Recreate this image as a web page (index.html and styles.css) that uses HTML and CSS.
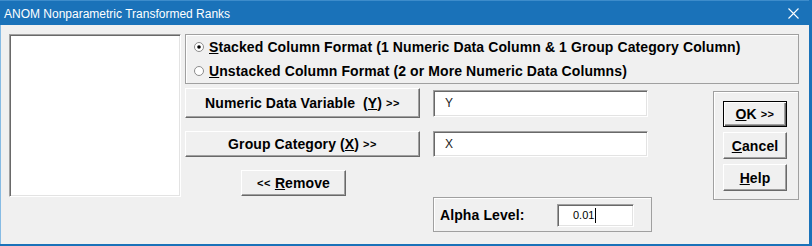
FILE: index.html
```html
<!DOCTYPE html>
<html lang="en">
<head>
    <meta charset="UTF-8">
    <title>ANOM Nonparametric Transformed Ranks</title>
    <link rel="stylesheet" href="styles.css">
</head>
<body>
    <div class="window">
        <div class="titlebar">
            <span class="title">ANOM Nonparametric Transformed Ranks</span>
            <svg class="close" width="11" height="11" viewBox="0 0 11 11">
                <path d="M0.5 0.5 L10.5 10.5 M10.5 0.5 L0.5 10.5" stroke="#fff" stroke-width="1.1" fill="none"/>
            </svg>
        </div>

        <div class="client">
            <div class="listbox"></div>

            <div class="main">
                <div class="group format">
                    <label class="radio">
                        <svg width="12" height="12" viewBox="0 0 12 12">
                            <circle cx="6" cy="6" r="4.5" fill="#fff" stroke="#8c8c8c"/>
                            <circle cx="6" cy="6" r="1.8" fill="#000"/>
                        </svg>
                        <span><u>S</u>tacked Column Format (1 Numeric Data Column &amp; 1 Group Category Column)</span>
                    </label>
                    <label class="radio">
                        <svg width="12" height="12" viewBox="0 0 12 12">
                            <circle cx="6" cy="6" r="4.5" fill="#fff" stroke="#8c8c8c"/>
                        </svg>
                        <span><u>U</u>nstacked Column Format (2 or More Numeric Data Columns)</span>
                    </label>
                </div>

                <div class="lower">
                    <div class="vars">
                        <div class="var-row first">
                            <button class="btn var-btn tall">Numeric Data Variable&nbsp; (<u>Y</u>) <span class="chev">&gt;&gt;</span></button>
                            <div class="field">Y</div>
                        </div>
                        <div class="var-row second">
                            <button class="btn var-btn">Group Category (<u>X</u>) <span class="chev">&gt;&gt;</span></button>
                            <div class="field">X</div>
                        </div>
                        <button class="btn remove"><span class="chev">&lt;&lt;</span> <u>R</u>emove</button>
                        <div class="group alpha">
                            <span class="alpha-label">Alpha Level:</span>
                            <div class="field small">0.01<span class="caret"></span></div>
                        </div>
                    </div>

                    <div class="group actions">
                        <button class="btn default"><u>O</u>K <span class="chev">&gt;&gt;</span></button>
                        <button class="btn"><u>C</u>ancel</button>
                        <button class="btn"><u>H</u>elp</button>
                    </div>
                </div>
            </div>
        </div>
    </div>
</body>
</html>
```

FILE: styles.css
```css
body {
    margin: 0;
    width: 812px;
    height: 246px;
    overflow: hidden;
    font-family: "Liberation Sans", Arial, sans-serif;
}
.window {
    box-sizing: border-box;
    height: 246px;
    background-color: #1a72b9;
    padding: 0 3px 2px 0;
    display: flex;
    flex-direction: column;
}
.titlebar {
    height: 25px;
    flex: none;
    display: flex;
    align-items: center;
    justify-content: space-between;
    padding: 0 10px 0 4px;
    color: #fff;
    font-size: 12px;
    border-top: 1px solid #3d8ccb;
    box-sizing: border-box;
}
.title {
    margin-top: 1px;
}
.client {
    flex: 1;
    background-color: #f0f0f0;
    border-left: 1px solid #86bbe4;
    display: flex;
    align-items: flex-start;
    padding: 9px 0 0 8px;
}
.listbox {
    box-sizing: border-box;
    width: 172px;
    height: 163px;
    background-color: #fff;
    border: 1px solid;
    border-color: #a0a0a0 #fff #fff #a0a0a0;
    box-shadow: inset 1px 1px #696969, inset -1px -1px #e3e3e3;
}
.main {
    margin-left: 4px;
    width: 614px;
}
.group {
    box-sizing: border-box;
    border: 1px solid #a0a0a0;
    box-shadow: inset 1px 1px #fff;
}
.format {
    height: 50px;
    padding: 0 0 0 7px;
    display: flex;
    flex-direction: column;
}
.radio {
    height: 24px;
    display: flex;
    align-items: center;
    gap: 4px;
    font-size: 14px;
    font-weight: bold;
    letter-spacing: 0.1px;
}
.radio svg {
    flex: none;
}
.lower {
    display: flex;
    align-items: flex-start;
    margin-top: 4px;
}
.vars {
    width: 467px;
    display: flex;
    flex-direction: column;
    align-items: flex-start;
}
.var-row {
    display: flex;
    align-items: flex-start;
}
.var-row.second {
    margin-top: 13px;
}
.btn {
    box-sizing: border-box;
    height: 26px;
    padding: 0;
    background-color: #f0f0f0;
    border: 1px solid;
    border-color: #fff #696969 #696969 #fff;
    box-shadow: inset -1px -1px #a0a0a0;
    font-family: "Liberation Sans", Arial, sans-serif;
    font-size: 14px;
    font-weight: bold;
    letter-spacing: 0.1px;
    color: #000;
}
.chev {
    font-size: 11px;
    letter-spacing: 0.5px;
    vertical-align: 1px;
}
.var-btn {
    width: 235px;
}
.var-btn.tall {
    height: 30px;
}
.field {
    box-sizing: border-box;
    width: 215px;
    height: 26px;
    margin-left: 13px;
    padding: 5px 0 0 11px;
    background-color: #fff;
    border: 1px solid;
    border-color: #a0a0a0 #fff #fff #a0a0a0;
    box-shadow: inset 1px 1px #696969, inset -1px -1px #e3e3e3;
    font-size: 12px;
    color: #222;
}
.first .field {
    margin-top: 2px;
    height: 27px;
}
.remove {
    width: 105px;
    margin: 13px 0 0 56px;
}
.alpha {
    width: 219px;
    height: 35px;
    margin: 1px 0 0 248px;
    display: flex;
    align-items: center;
    padding-left: 6px;
}
.alpha-label {
    font-size: 14px;
    font-weight: bold;
    letter-spacing: 0.1px;
    width: 117px;
}
.field.small {
    width: 77px;
    height: 23px;
    margin: 1px 0 0 0;
    padding: 4px 0 0 15px;
    display: flex;
    align-items: flex-start;
    font-size: 11px;
    color: #000;
}
.caret {
    width: 1px;
    height: 15px;
    margin: -1px 0 0 1px;
    background-color: #000;
}
.actions {
    width: 86px;
    height: 109px;
    margin: 3px 0 0 61px;
    padding: 9px 0 0 9px;
    display: flex;
    flex-direction: column;
    gap: 5px;
}
.actions .btn {
    width: 64px;
    height: 27px;
}
.actions .btn.default {
    height: 26px;
    border: 1px solid #000;
    box-shadow: inset 1px 1px #fff, inset -1px -1px #696969, inset -2px -2px #a0a0a0;
}
```
